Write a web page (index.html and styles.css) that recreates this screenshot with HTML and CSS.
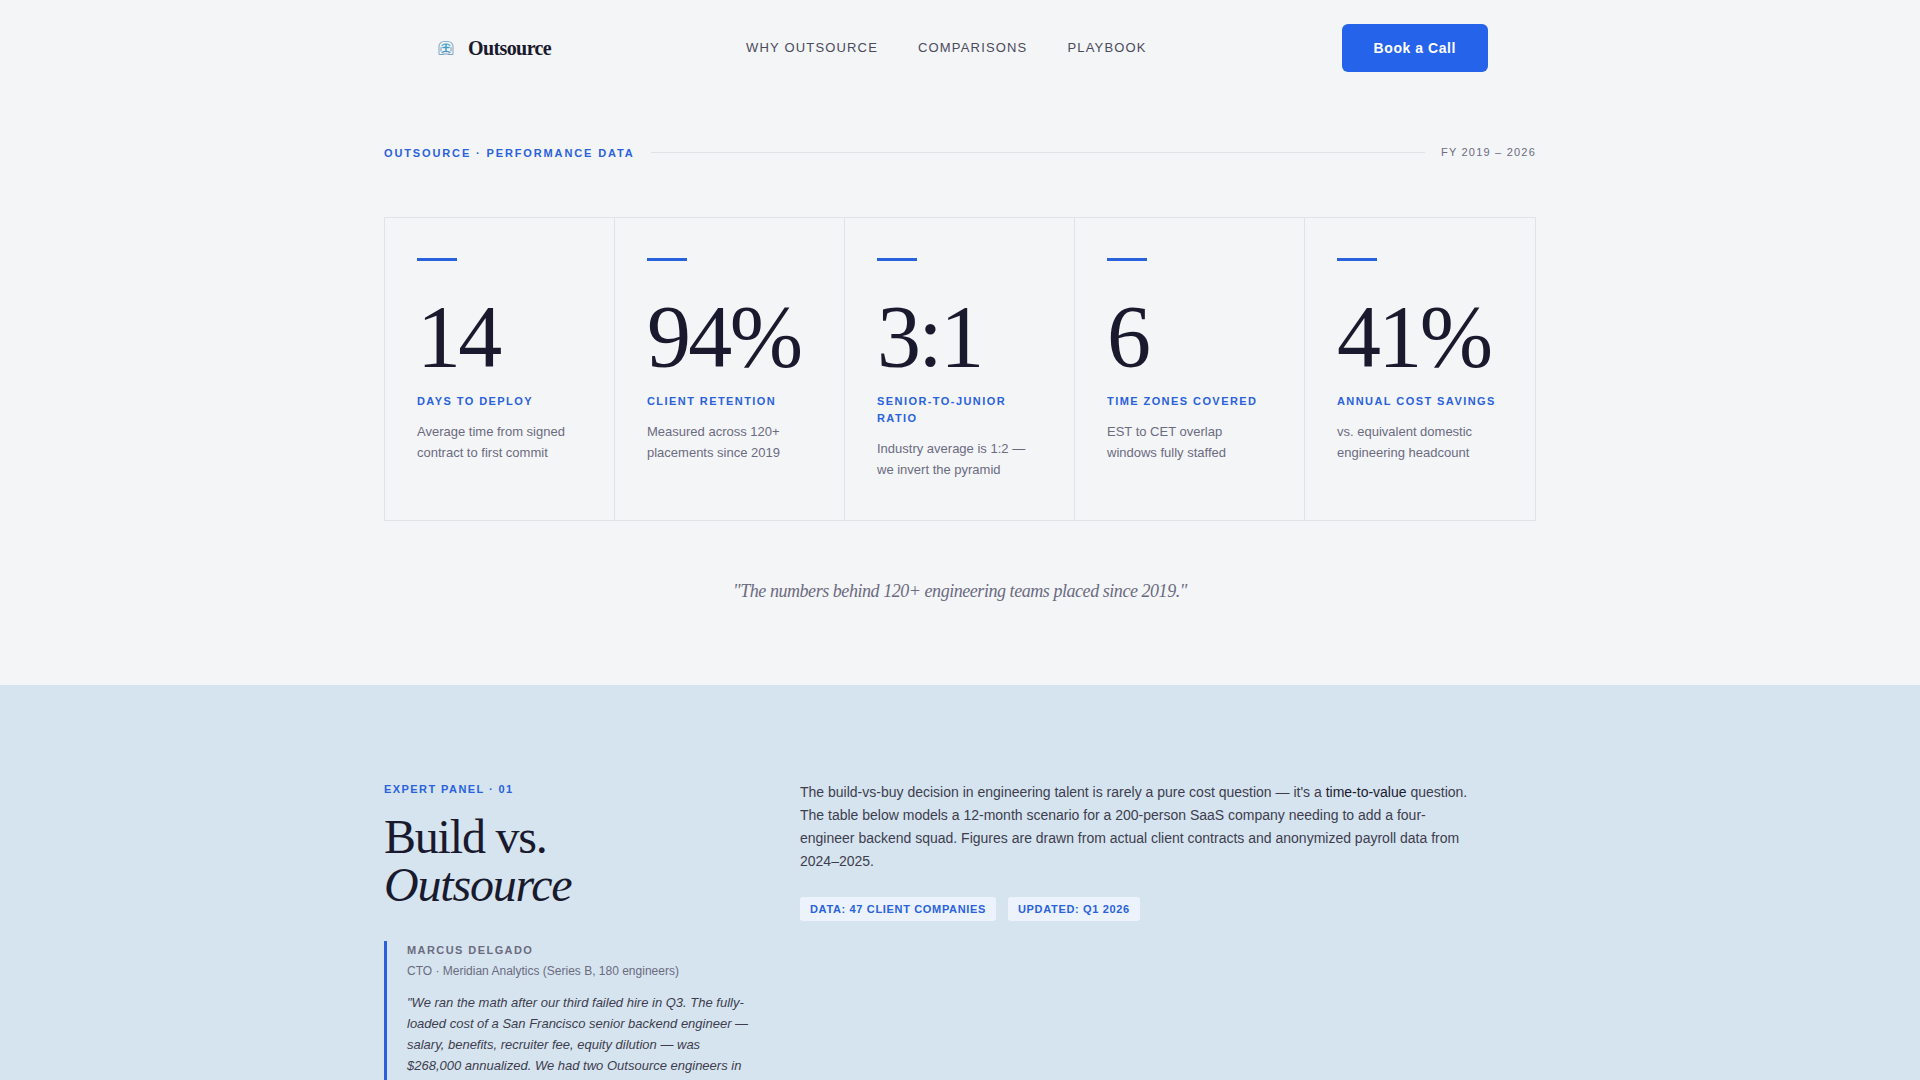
FILE: index.html
```html
<!DOCTYPE html>
<html lang="en">
<head>
<meta charset="utf-8">
<meta name="viewport" content="width=device-width, initial-scale=1">
<title>Outsource</title>
<link rel="stylesheet" href="styles.css">
</head>
<body>
<header class="site-header">
  <a class="brand" href="#">
    <svg class="brand-mark" viewBox="0 0 28 28" aria-hidden="true" fill="none" stroke-linecap="round">
      <path d="M7 20v-7.500C7 9.500 9.500 7.500 12 7.500h4c2.500 0 5 2 5 5V20" stroke="#8fb3cb" stroke-width="1.200"/>
      <path d="M9 17v-3.500M19 17v-3.500" stroke="#7f93b4" stroke-width="1"/>
      <path d="M10 11.500c2-2.300 6-2.300 8 0" stroke="#63add6" stroke-width="1.200"/>
      <path d="M14 10.500v7M11 13.500h6" stroke="#3f9fd0" stroke-width="1.500"/>
      <path d="M10 18.500c2-1.500 6-1.500 8 0" stroke="#4d94c4" stroke-width="1.200"/>
      <path d="M7.500 20.500h4M16.500 20.500h4M11 20h6" stroke="#7b9fbe" stroke-width="1"/>
    </svg>
    <span class="brand-name">Outsource</span>
  </a>
  <nav class="site-nav" aria-label="Main">
    <a href="#why">Why Outsource</a>
    <a href="#comparisons">Comparisons</a>
    <a href="#playbook">Playbook</a>
  </nav>
  <button class="cta" type="button">Book a Call</button>
</header>
<main>
  <section class="metrics" id="why">
    <div class="metrics-head">
      <h2 class="eyebrow eyebrow-wide">Outsource · Performance Data</h2>
      <span class="rule"></span>
      <span class="period">FY 2019 – 2026</span>
    </div>
    <div class="stats">
      <article class="stat">
        <p class="stat-value">14</p>
        <h3 class="stat-label">Days to Deploy</h3>
        <p class="stat-note">Average time from signed contract to first commit</p>
      </article>
      <article class="stat">
        <p class="stat-value">94%</p>
        <h3 class="stat-label">Client Retention</h3>
        <p class="stat-note">Measured across 120+ placements since 2019</p>
      </article>
      <article class="stat">
        <p class="stat-value">3:1</p>
        <h3 class="stat-label">Senior-to-Junior Ratio</h3>
        <p class="stat-note">Industry average is 1:2 — we invert the pyramid</p>
      </article>
      <article class="stat">
        <p class="stat-value">6</p>
        <h3 class="stat-label">Time Zones Covered</h3>
        <p class="stat-note">EST to CET overlap windows fully staffed</p>
      </article>
      <article class="stat">
        <p class="stat-value">41%</p>
        <h3 class="stat-label">Annual Cost Savings</h3>
        <p class="stat-note">vs. equivalent domestic engineering headcount</p>
      </article>
    </div>
    <p class="pull-quote">"The numbers behind 120+ engineering teams placed since 2019."</p>
  </section>
  <section class="panel" id="comparisons">
    <div class="panel-grid">
      <div class="panel-side">
        <p class="eyebrow">Expert Panel · 01</p>
        <h2 class="panel-title">Build vs. <em>Outsource</em></h2>
        <blockquote class="expert">
          <p class="expert-name">Marcus Delgado</p>
          <p class="expert-role">CTO · Meridian Analytics (Series B, 180 engineers)</p>
          <p class="expert-quote">"We ran the math after our third failed hire in Q3. The fully-loaded cost of a San Francisco senior backend engineer — salary, benefits, recruiter fee, equity dilution — was $268,000 annualized. We had two Outsource engineers in</p>
        </blockquote>
      </div>
      <div class="panel-body">
        <p class="panel-intro">The build-vs-buy decision in engineering talent is rarely a pure cost question — it's a <strong>time-to-value</strong> question. The table below models a 12-month scenario for a 200-person SaaS company needing to add a four-engineer backend squad. Figures are drawn from actual client contracts and anonymized payroll data from 2024–2025.</p>
        <ul class="tags">
          <li>Data: 47 client companies</li>
          <li>Updated: Q1 2026</li>
        </ul>
      </div>
    </div>
  </section>
</main>
</body>
</html>
```
FILE: styles.css
```css
:root {
  --ink: #1a1a2e;
  --body: #3d3d4e;
  --muted: #6b6b80;
  --blue: #2962dc;
  --line: #dfe2e6;
  --serif: "Liberation Serif", "Times New Roman", serif;
  --sans: "Liberation Sans", Arial, sans-serif;
}

* { box-sizing: border-box; }

h2, h3, p, ul, blockquote { margin: 0; padding: 0; }

body {
  margin: 0;
  background: #f4f5f7;
  color: var(--body);
  font-family: var(--sans);
}

/* Header */
.site-header {
  display: flex;
  align-items: center;
  justify-content: space-between;
  max-width: 1152px;
  margin: 0 auto;
  padding: 24px 48px;
}

.brand {
  display: flex;
  align-items: center;
  gap: 8px;
  color: var(--ink);
  text-decoration: none;
}

.brand-mark { width: 28px; height: 28px; }

.brand-name {
  font: bold 20px/28px var(--serif);
  letter-spacing: -0.03em;
}

.site-nav { display: flex; gap: 40px; }

.site-nav a {
  color: #4a4a5a;
  font-size: 13px;
  line-height: 20px;
  letter-spacing: 0.09em;
  text-decoration: none;
  text-transform: uppercase;
}

.cta {
  height: 48px;
  padding: 0 32px;
  border: 0;
  border-radius: 6px;
  background: #2563eb;
  color: #fff;
  font: bold 14px/20px var(--sans);
  letter-spacing: 0.04em;
}

/* Performance data */
.metrics {
  max-width: 1280px;
  margin: 0 auto;
  padding: 48px 64px 80px;
}

.metrics-head {
  display: flex;
  align-items: center;
  gap: 16px;
  margin-bottom: 56px;
}

.eyebrow {
  color: var(--blue);
  font-size: 11px;
  font-weight: bold;
  line-height: 16px;
  letter-spacing: 0.13em;
  text-transform: uppercase;
}

.eyebrow-wide { letter-spacing: 0.17em; }

.rule { flex: 1; height: 1px; background: var(--line); }

.period {
  color: var(--muted);
  font-size: 11px;
  line-height: 17px;
  letter-spacing: 0.11em;
}

.stats {
  display: grid;
  grid-template-columns: repeat(5, 1fr);
  border: 1px solid var(--line);
}

.stat { padding: 40px 32px; }

.stat:not(:last-child) { border-right: 1px solid var(--line); }

.stat::before {
  content: "";
  display: block;
  width: 40px;
  height: 3px;
  margin-bottom: 32px;
  background: var(--blue);
}

.stat-value {
  color: var(--ink);
  font: 88px/88px var(--serif);
  letter-spacing: -0.03em;
}

.stat-label {
  margin: 12px 0 11px;
  color: var(--blue);
  font-size: 11px;
  font-weight: bold;
  line-height: 17px;
  letter-spacing: 0.13em;
  text-transform: uppercase;
}

.stat-note {
  color: var(--muted);
  font-size: 13px;
  line-height: 21px;
}

.pull-quote {
  margin-top: 56px;
  color: var(--muted);
  font: italic 18px/28px var(--serif);
  letter-spacing: -0.025em;
  text-align: center;
}

/* Expert panel */
.panel { background: #d6e4ef; }

.panel-grid {
  display: grid;
  grid-template-columns: 1fr 2fr;
  gap: 48px;
  max-width: 1280px;
  margin: 0 auto;
  padding: 96px 64px;
}

.panel-title {
  margin: 16px 0 32px;
  color: var(--ink);
  font: 48px/48px var(--serif);
  letter-spacing: -0.025em;
}

.panel-title em { display: block; }

.expert {
  padding: 0 0 24px 20px;
  border-left: 3px solid var(--blue);
}

.expert-name {
  color: var(--muted);
  font-size: 11px;
  font-weight: bold;
  line-height: 18px;
  letter-spacing: 0.13em;
  text-transform: uppercase;
}

.expert-role {
  margin: 4px 0 12px;
  color: var(--muted);
  font-size: 12px;
  line-height: 17px;
}

.expert-quote {
  font-size: 13px;
  font-style: italic;
  line-height: 21px;
}

.panel-intro {
  max-width: 680px;
  font-size: 14px;
  line-height: 23px;
}

.panel-intro strong { color: var(--ink); font-weight: normal; }

.tags {
  display: flex;
  gap: 12px;
  margin-top: 24px;
  list-style: none;
}

.tags li {
  padding: 4px 10px;
  border-radius: 3px;
  background: #ecf3fd;
  color: var(--blue);
  font-size: 11px;
  font-weight: bold;
  line-height: 16px;
  letter-spacing: 0.06em;
  text-transform: uppercase;
}
```
